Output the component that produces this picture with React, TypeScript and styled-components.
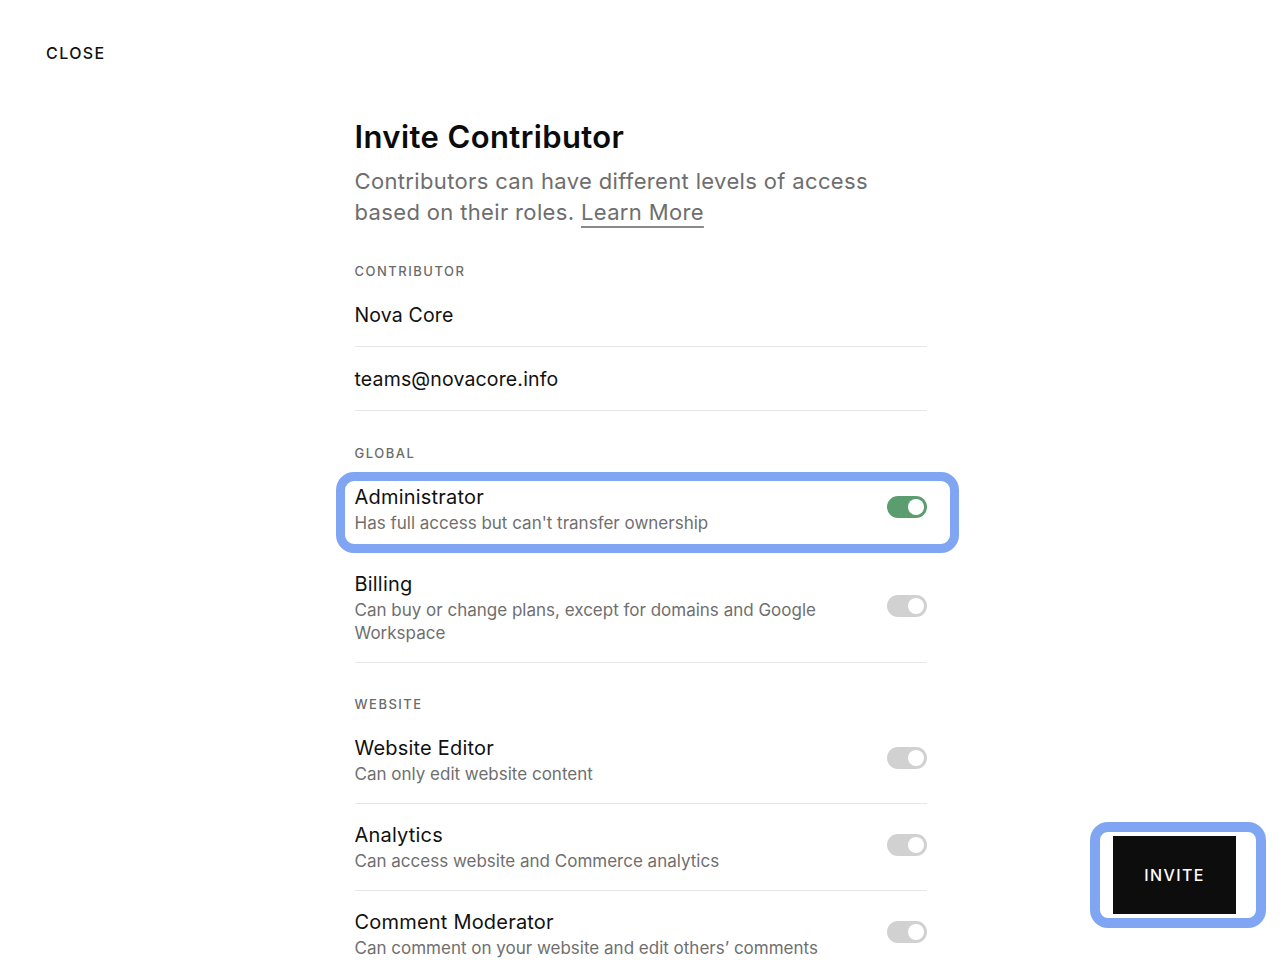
import React, { useState } from "react";
import styled, { createGlobalStyle } from "styled-components";

const GlobalStyle = createGlobalStyle`
  * {
    box-sizing: border-box;
  }
  body {
    margin: 0;
    background: #ffffff;
    font-family: Inter, "Liberation Sans", Arial, sans-serif;
    color: #0e0e0e;
  }
`;

const Page = styled.div`
  min-height: 960px;
  padding: 43px 46px 0;
`;

const CloseLink = styled.button`
  display: block;
  border: 0;
  background: none;
  padding: 0;
  font-family: inherit;
  font-size: 16px;
  line-height: 20px;
  font-weight: 500;
  letter-spacing: 1.4px;
  color: #111;
  cursor: pointer;
`;

const Column = styled.main`
  width: 573px;
  margin: 56px auto 0;
  padding-left: 1px;
`;

const Title = styled.h1`
  margin: 0;
  font-size: 31px;
  line-height: 36px;
  font-weight: 600;
  letter-spacing: 0.4px;
  color: #0b0b0b;
`;

const Intro = styled.p`
  max-width: 560px;
  margin: 11px 0 0;
  font-size: 22px;
  line-height: 31px;
  letter-spacing: 0.35px;
  color: #6e6e6e;
`;

const LearnMore = styled.a`
  color: #6e6e6e;
  text-decoration: underline;
  text-decoration-color: #8a8a8a;
  text-decoration-thickness: 2px;
  text-underline-offset: 6px;
  cursor: pointer;
`;

const SectionLabel = styled.div<{ $top: number; $bottom: number }>`
  margin-top: ${(p) => p.$top}px;
  margin-bottom: ${(p) => p.$bottom}px;
  font-size: 13px;
  line-height: 16px;
  font-weight: 500;
  letter-spacing: 1.5px;
  color: #6b6b6b;
  text-transform: uppercase;
`;

const Field = styled.div`
  height: 64px;
  display: flex;
  align-items: center;
  border-bottom: 1px solid #e6e6e6;
  font-size: 19.5px;
  letter-spacing: 0.15px;
  color: #111;
`;

const RoleRow = styled.div`
  position: relative;
  display: flex;
  align-items: center;
  gap: 40px;
  padding: 18px 0 17px;
  border-bottom: 1px solid #e6e6e6;
`;

const RoleText = styled.div`
  flex: 1;
`;

const RoleName = styled.div`
  font-size: 20px;
  line-height: 26px;
  letter-spacing: 0.2px;
  color: #111;
`;

const RoleDesc = styled.div`
  margin-top: 2px;
  font-size: 17px;
  line-height: 23px;
  color: #6f6f6f;
`;

const Toggle = styled.button<{ $on: boolean }>`
  position: relative;
  flex: none;
  width: 40px;
  height: 22px;
  margin-bottom: 5px;
  border: 0;
  padding: 0;
  border-radius: 11px;
  background: ${(p) => (p.$on ? "#5c9d6f" : "#d1d1d1")};
  cursor: pointer;

  &::after {
    content: "";
    position: absolute;
    top: 3px;
    right: 3px;
    width: 16px;
    height: 16px;
    border-radius: 50%;
    background: #ffffff;
  }
`;

const Highlight = styled.span<{ $inset: string; $width: number }>`
  position: absolute;
  inset: ${(p) => p.$inset};
  border: ${(p) => p.$width}px solid #80a6f3;
  border-radius: 18px;
  pointer-events: none;
`;

const InviteWrap = styled.div`
  position: fixed;
  right: 44px;
  bottom: 46px;
`;

const InviteButton = styled.button`
  display: block;
  width: 123px;
  height: 78px;
  border: 0;
  background: #0d0d0d;
  color: #ffffff;
  font-family: inherit;
  font-size: 16px;
  font-weight: 500;
  letter-spacing: 1.4px;
  cursor: pointer;
`;

type Role = {
  id: string;
  name: string;
  desc: string;
};

const globalRoles: Role[] = [
  {
    id: "admin",
    name: "Administrator",
    desc: "Has full access but can't transfer ownership",
  },
  {
    id: "billing",
    name: "Billing",
    desc: "Can buy or change plans, except for domains and Google Workspace",
  },
];

const websiteRoles: Role[] = [
  { id: "editor", name: "Website Editor", desc: "Can only edit website content" },
  {
    id: "analytics",
    name: "Analytics",
    desc: "Can access website and Commerce analytics",
  },
  {
    id: "moderator",
    name: "Comment Moderator",
    desc: "Can comment on your website and edit others\u2019 comments",
  },
];

const App = () => {
  const [enabled, setEnabled] = useState<Record<string, boolean>>({
    admin: true,
  });

  const renderRole = (role: Role) => (
    <RoleRow key={role.id}>
      <RoleText>
        <RoleName>{role.name}</RoleName>
        <RoleDesc>{role.desc}</RoleDesc>
      </RoleText>
      <Toggle
        $on={!!enabled[role.id]}
        aria-label={role.name}
        onClick={() =>
          setEnabled((prev) => ({ ...prev, [role.id]: !prev[role.id] }))
        }
      />
      {role.id === "admin" && <Highlight $inset="6px -32px -1px -19px" $width={9} />}
    </RoleRow>
  );

  return (
    <>
      <GlobalStyle />
      <Page>
        <CloseLink>CLOSE</CloseLink>
        <Column>
          <Title>Invite Contributor</Title>
          <Intro>
            Contributors can have different levels of access based on their
            roles. <LearnMore>Learn More</LearnMore>
          </Intro>

          <SectionLabel $top={35} $bottom={4}>
            Contributor
          </SectionLabel>
          <Field>Nova Core</Field>
          <Field>teams@novacore.info</Field>

          <SectionLabel $top={34} $bottom={5}>
            Global
          </SectionLabel>
          {globalRoles.map(renderRole)}

          <SectionLabel $top={33} $bottom={5}>
            Website
          </SectionLabel>
          {websiteRoles.map(renderRole)}
        </Column>
        <InviteWrap>
          <InviteButton>INVITE</InviteButton>
          <Highlight $inset="-14px -30px -14px -23px" $width={10} />
        </InviteWrap>
      </Page>
    </>
  );
};

export default App;
